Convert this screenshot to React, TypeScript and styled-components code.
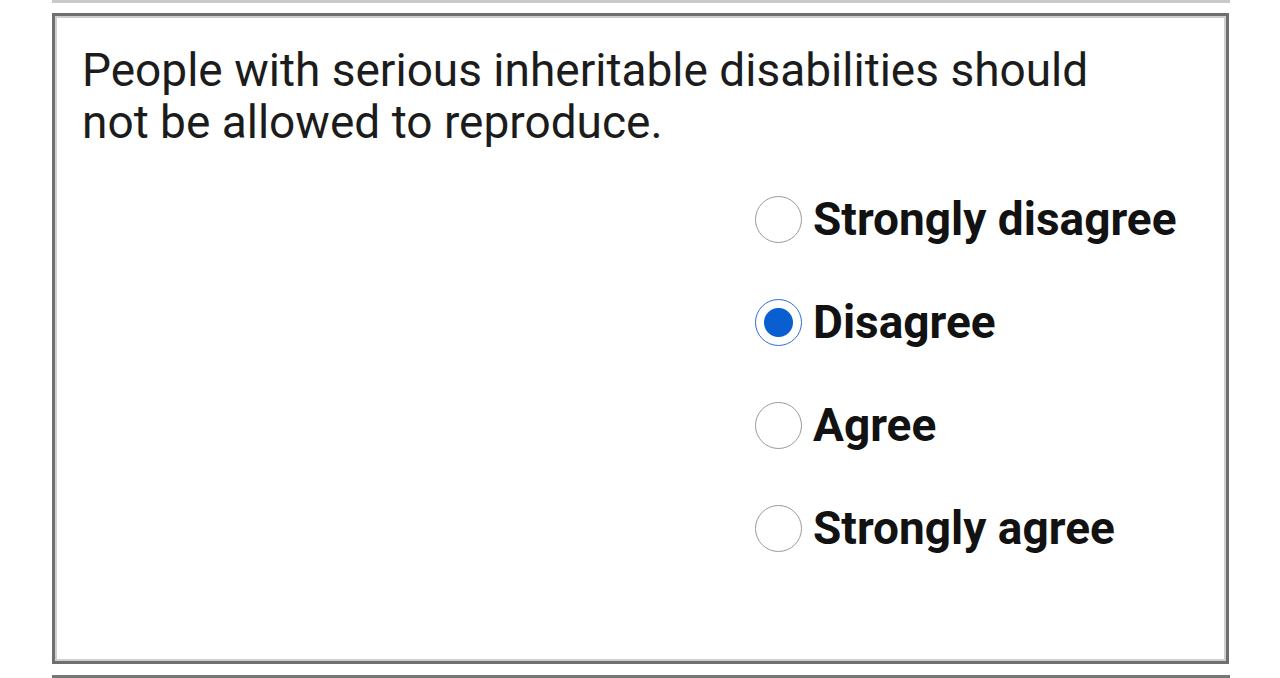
import React from 'react';
import styled, { createGlobalStyle, css } from 'styled-components';

const GlobalStyle = createGlobalStyle`
  html, body {
    margin: 0;
    padding: 0;
    background: #ffffff;
  }
  body {
    font-family: Roboto, "Noto Sans", "Liberation Sans", sans-serif;
    color: #1a1a1a;
  }
`;

const options = ['Strongly disagree', 'Disagree', 'Agree', 'Strongly agree'];

export default function App() {
  const [selected, setSelected] = React.useState('Disagree');

  return (
    <>
      <GlobalStyle />
      <Page>
        <Rule $tone="light" />
        <Card>
          <Question>
            People with serious inheritable disabilities should
            <br />
            not be allowed to reproduce.
          </Question>
          <Options>
            {options.map((option) => (
              <Option key={option} onClick={() => setSelected(option)}>
                <Radio $checked={selected === option} />
                <Label>{option}</Label>
              </Option>
            ))}
          </Options>
        </Card>
        <Rule $tone="dark" />
      </Page>
    </>
  );
}

const Page = styled.div`
  width: 1178px;
  margin-left: 52px;
  display: flex;
  flex-direction: column;
`;

const Rule = styled.div<{ $tone: 'light' | 'dark' }>`
  height: 3px;
  background: ${({ $tone }) => ($tone === 'light' ? '#c9c9c9' : '#777777')};
  ${({ $tone }) =>
    $tone === 'dark' &&
    css`
      margin-top: 11px;
    `}
`;

const Card = styled.div`
  box-sizing: border-box;
  margin-top: 10px;
  width: 1177px;
  height: 651px;
  border: 3px solid #6f6f6f;
  box-shadow: inset 0 0 0 2px #cfcfcf;
  padding: 28px 27px 0;
`;

const Question = styled.p`
  margin: 0;
  font-size: 46px;
  line-height: 52px;
  font-weight: 400;
  color: #1c1c1c;
`;

const Options = styled.div`
  display: flex;
  flex-direction: column;
  gap: 57px;
  margin-top: 48px;
  margin-left: 673px;
`;

const Option = styled.label`
  display: flex;
  align-items: center;
  gap: 11px;
  height: 46px;
  cursor: pointer;
`;

const Radio = styled.span<{ $checked: boolean }>`
  box-sizing: border-box;
  width: 47px;
  height: 47px;
  flex: none;
  border-radius: 50%;
  border: 1px solid #9a9a9a;
  background: #ffffff;
  ${({ $checked }) =>
    $checked &&
    css`
      border-color: #2c6fd0;
      background: radial-gradient(circle, #0a5fd0 0 14px, #ffffff 15px);
    `}
`;

const Label = styled.span`
  font-size: 46px;
  font-weight: 700;
  color: #121212;
  line-height: 1;
`;
